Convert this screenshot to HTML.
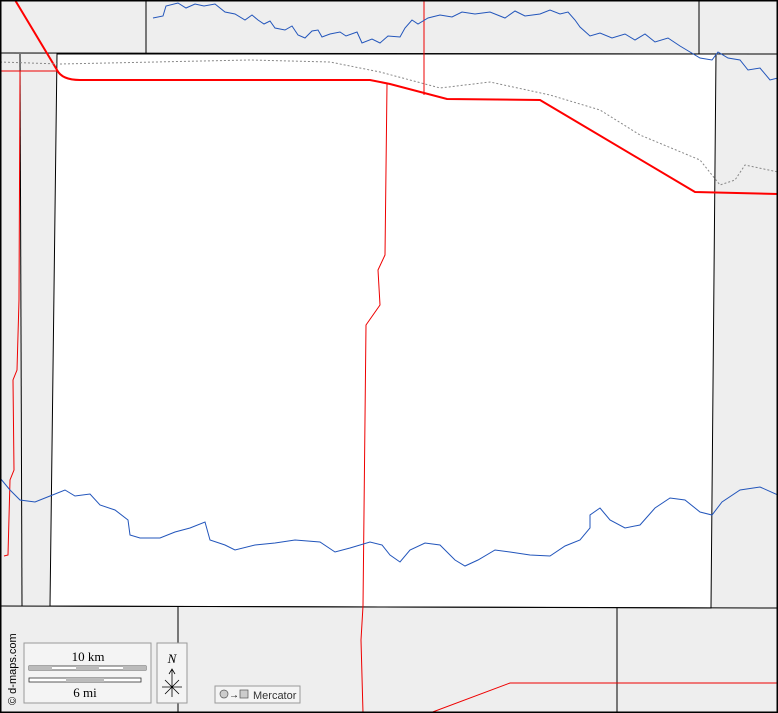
<!DOCTYPE html>
<html><head><meta charset="utf-8"><style>
html,body{margin:0;padding:0;width:778px;height:713px;overflow:hidden;background:#eee}
svg{display:block}
</style></head><body>
<svg width="778" height="713" viewBox="0 0 778 713" xmlns="http://www.w3.org/2000/svg">
<rect x="0" y="0" width="778" height="713" fill="#eeeeee"/>
<polygon points="57,54 716,54 711,608 50,606" fill="#fff" stroke="#000" stroke-width="1"/>
<g stroke="#000" stroke-width="1" fill="none">
<line x1="0" y1="53" x2="778" y2="54"/>
<line x1="146" y1="0" x2="146" y2="53"/>
<line x1="699" y1="0" x2="699" y2="54"/>
<line x1="20" y1="54" x2="22" y2="606"/>
<line x1="0" y1="606" x2="778" y2="608"/>
<line x1="178" y1="606" x2="178" y2="713"/>
<line x1="617" y1="608" x2="617" y2="713"/>
</g>
<g stroke="#e00" stroke-width="1" fill="none">
<line x1="424" y1="0" x2="424" y2="95"/>
<line x1="0" y1="71" x2="57" y2="71"/>
<path d="M20,71 L19,300 L17,370 L13,380 L14,470 L10,480 L8,555 L4,556"/>
<path d="M387,84 L385,255 L378,270 L380,305 L366,325 L363,606 L361,640 L363,713"/>
<path d="M430,713 L510,683 L778,683"/>
</g>
<path d="M15,0 L57,70 Q62,80 80,80 L370,80 L390,84 L447,99 L540,100 L695,192 L778,194" stroke="#f00" stroke-width="2" fill="none"/>
<path d="M0,62 L60,64 L250,60 L330,62 L380,72 L440,88 L490,82 L550,95 L600,110 L640,135 L700,160 L720,185 L735,180 L745,165 L778,172" stroke="#888" stroke-width="1" stroke-dasharray="2,2" fill="none"/>
<path d="M153,18 L163,16 L166,6 L178,3 L186,8 L195,4 L204,6 L215,4 L225,12 L235,14 L245,20 L252,15 L258,20 L264,24 L270,21 L275,28 L285,30 L292,26 L298,35 L305,38 L312,31 L318,30 L322,37 L330,34 L340,32 L346,36 L357,32 L362,43 L372,39 L380,43 L388,36 L400,37 L405,28 L412,20 L418,24 L428,18 L440,15 L452,17 L462,12 L475,14 L490,12 L505,18 L515,11 L525,16 L540,14 L550,10 L560,14 L568,12 L575,20 L580,27 L590,36 L600,33 L612,38 L625,34 L635,40 L645,34 L655,42 L668,38 L680,46 L690,52 L700,58 L712,60 L718,52 L728,58 L740,60 L748,70 L760,68 L770,80 L778,78" stroke="#2255bb" stroke-width="1" fill="none"/>
<path d="M0,478 L10,490 L20,500 L35,502 L50,496 L65,490 L75,496 L90,494 L100,505 L115,510 L128,520 L130,535 L140,538 L160,538 L175,532 L190,528 L205,522 L210,540 L225,545 L235,550 L255,545 L275,543 L295,540 L320,542 L335,552 L350,548 L370,542 L382,545 L390,555 L400,562 L410,550 L425,543 L440,545 L455,560 L465,566 L478,560 L495,550 L510,552 L530,555 L550,556 L565,546 L580,540 L590,528 L590,515 L600,508 L610,520 L625,528 L640,525 L655,508 L670,498 L685,500 L700,512 L712,515 L722,502 L740,490 L760,487 L778,495" stroke="#2255bb" stroke-width="1" fill="none"/>
<rect x="0.5" y="0.5" width="777" height="712" fill="none" stroke="#000" stroke-width="2"/>
<rect x="24" y="643" width="127" height="60" fill="#f4f4f4" stroke="#999"/>
<text x="88" y="661" font-family="Liberation Serif,serif" font-size="13" text-anchor="middle">10 km</text>
<rect x="29" y="666" width="117" height="4" fill="#fff" stroke="#333" stroke-width="0.8"/>
<rect x="29" y="666" width="23" height="4" fill="#bbb"/><rect x="76" y="666" width="23" height="4" fill="#bbb"/><rect x="123" y="666" width="23" height="4" fill="#bbb"/>
<rect x="29" y="678" width="112" height="4" fill="#fff" stroke="#333" stroke-width="0.8"/>
<rect x="66" y="678" width="38" height="4" fill="#bbb"/>
<text x="85" y="697" font-family="Liberation Serif,serif" font-size="13" text-anchor="middle">6 mi</text>
<rect x="157" y="643" width="30" height="60" fill="#f4f4f4" stroke="#999"/>
<text x="172" y="663" font-family="Liberation Serif,serif" font-style="italic" font-size="13" text-anchor="middle">N</text>
<path d="M172,697 L172,670 M169,674 L172,669 L175,674 M162,687 L182,687 M165,680 L179,694 M179,680 L165,694" stroke="#000" stroke-width="0.8" fill="none"/>
<text transform="translate(16,705) rotate(-90)" font-family="Liberation Sans,sans-serif" font-size="11">© d-maps.com</text>
<rect x="215" y="686" width="85" height="17" fill="#f4f4f4" stroke="#999"/>
<circle cx="224" cy="694" r="4" fill="#ccc" stroke="#555" stroke-width="0.7"/>
<text x="229" y="698" font-family="Liberation Sans,sans-serif" font-size="10">→</text>
<rect x="240" y="690" width="8" height="8" fill="#ccc" stroke="#555" stroke-width="0.7"/>
<text x="253" y="699" font-family="Liberation Sans,sans-serif" font-size="11" fill="#333">Mercator</text>
</svg>
</body></html>
